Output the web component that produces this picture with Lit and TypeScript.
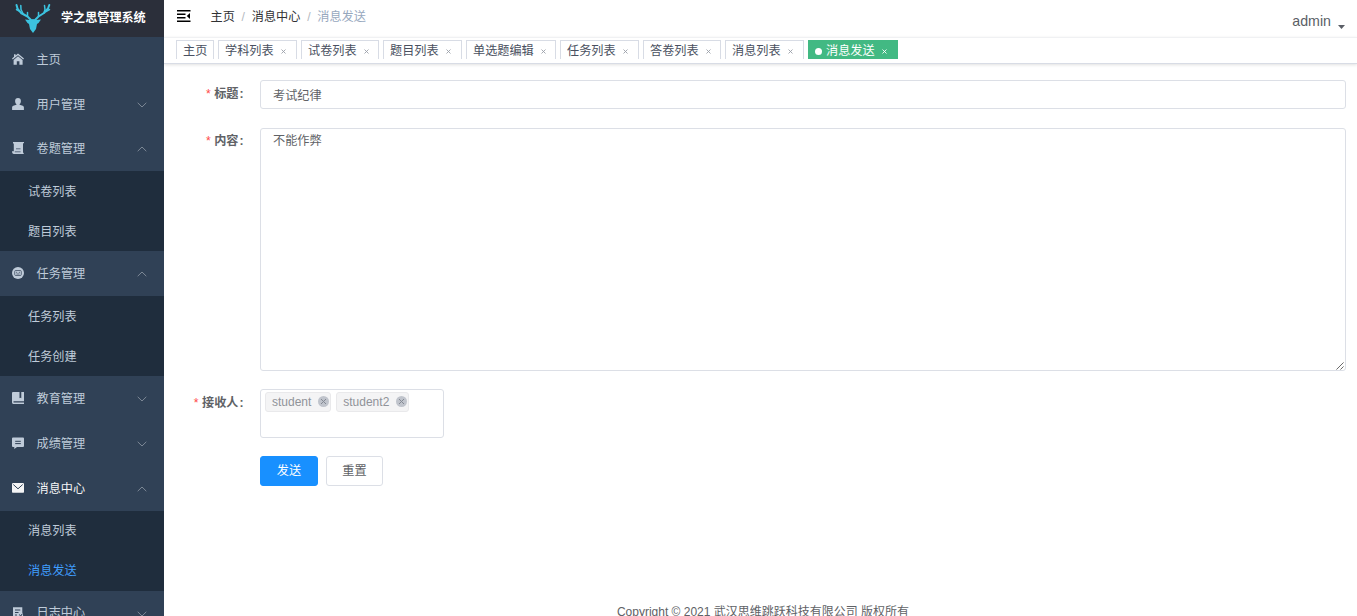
import { LitElement, html, svg, css, nothing } from "lit";
import { customElement, property } from "lit/decorators.js";
import { classMap } from "lit/directives/class-map.js";
import { styleMap } from "lit/directives/style-map.js";

const icons: Record<string, unknown> = {
  home: svg`<path d="M6 0.4 12 5.6 11.2 6.6 6 2.2 0.8 6.6 0 5.6 2 3.8V1.2H3.6V2.5Z"/><path d="M6 3.2 10.6 7.1V11.8H7.4V8.2H4.8V11.8H1.6V7.1Z"/>`,
  user: svg`<path d="M6 0a2.900 2.900 0 0 1 2.900 2.900c0 1.500-.6 2.600-1.300 3.200v.7l3.100 1c.8.3 1.200 1 1.200 1.800V11.900H.1V9.600c0-.8.4-1.500 1.200-1.800l3.100-1v-.7C3.700 5.500 3.100 4.400 3.100 2.900a2.900 2.900 0 0 1 2.900-2.900Z"/>`,
  paper: svg`<path d="M1 0H12V1.300H11V10.300L12 12H2C.6 12 0 10.900 0 9.300H1.800V1.400H1Z"/><path d="M4 6.800H8.500M2.800 9.800H8.600" class="cut thin"/>`,
  task: svg`<circle cx="6" cy="6" r="6"/><rect x="2.700" y="3.500" width="6.600" height="5" rx="1" class="cut thin"/><path d="M4 5.300H5.200M6.800 5.300H8M4.400 7H7.600" class="cut thin"/>`,
  book: svg`<path d="M1 0H7.500V6.300L8.400 5.700 9.300 6.300V0H12V9.200H1.500V10.400H12V12H1.200Q0 12 0 10.600V1Q0 0 1 0Z"/>`,
  chat: svg`<path d="M1 .600H11Q12 .600 12 1.600V9Q12 10 11 10H5L2.300 11.900V10H1Q0 10 0 9V1.600Q0 .600 1 .600Z"/><path d="M3.200 4.300H8.800M3.200 6.600H8.800" class="cut"/>`,
  mail: svg`<path d="M.600 1.100H11.400L12 1.700V10.200L11.400 10.800H.600L0 10.200V1.700Z"/><path d="M1.300 2.500 6 6.800 10.700 2.500" class="cut"/>`,
  log: svg`<path d="M1 .200H10.300V5.600L12 11.800H0V10.500H1Z"/><path d="M3 3H8.300M3 5.500H6.500M3 8H5M7 7.500 10.500 10.500M10 7 8 10.500" class="cut"/>`,
};

interface MenuGroup {
  label: string;
  icon: string;
  arrow?: "up" | "down";
  current?: boolean;
  size?: "short" | "raised";
  children?: { label: string; current?: boolean }[];
}

const menu: MenuGroup[] = [
  { label: "主页", icon: "home" },
  { label: "用户管理", icon: "user", arrow: "down", size: "short" },
  { label: "卷题管理", icon: "paper", arrow: "up", children: [{ label: "试卷列表" }, { label: "题目列表" }] },
  { label: "任务管理", icon: "task", arrow: "up", children: [{ label: "任务列表" }, { label: "任务创建" }] },
  { label: "教育管理", icon: "book", arrow: "down" },
  { label: "成绩管理", icon: "chat", arrow: "down" },
  { label: "消息中心", icon: "mail", arrow: "up", current: true, children: [{ label: "消息列表" }, { label: "消息发送", current: true }] },
  { label: "日志中心", icon: "log", arrow: "down", size: "raised" },
];

const tabs = [
  { label: "主页", width: 38 },
  { label: "学科列表", width: 79 },
  { label: "试卷列表", width: 78 },
  { label: "题目列表", width: 79 },
  { label: "单选题编辑", width: 90 },
  { label: "任务列表", width: 79 },
  { label: "答卷列表", width: 78 },
  { label: "消息列表", width: 79 },
  { label: "消息发送", width: 90, current: true },
];

@customElement("side-menu")
class SideMenu extends LitElement {
  static styles = css`
    :host { display: block; width: 164px; flex: none; height: 616px; overflow: hidden; background: #304156; color: #bfcbd9; }
    .brand { height: 37px; background: #2b2f3a; display: flex; align-items: center; color: #fff; font-weight: bold; font-size: 12.100px; }
    .logo { width: 36px; height: 32px; margin: 0 10px 2px 15px; display: block; }
    .brand-name { padding-bottom: 4px; white-space: nowrap; }
    .row { height: 45px; box-sizing: border-box; display: flex; align-items: center; padding: 0 17px 0 12px; }
    .row.short { height: 44px; padding-top: 1px; }
    .row.raised { padding-bottom: 1px; }
    .row.current { color: #f4f4f5; }
    .icon { width: 12px; height: 12px; fill: currentColor; display: block; margin: 0 12.500px 1px 0; }
    .icon .cut { fill: none; stroke: #304156; stroke-width: 1; }
    .icon .thin { stroke-width: .7; }
    .label { flex: 1; line-height: 18px; }
    .arrow { width: 10px; height: 6px; fill: none; stroke: #7d8896; stroke-width: 1; display: block; margin-top: 1px; }
    .sub { background: #1f2d3d; }
    .leaf { height: 40px; box-sizing: border-box; padding: 1px 0 0 28px; line-height: 40px; overflow: hidden; }
    .row.current + .sub .leaf { padding-top: 0; }
    .leaf.current { color: #409eff; }
  `;
  render() {
    return html`
      <div class="brand">
        <svg class="logo" viewBox="0 0 36 32">
          <g fill="none" stroke="#3cc3df" stroke-linecap="round" stroke-linejoin="round">
            <path stroke-width="2" d="M16 18 12.500 14.500 6 11 2.500 6.500 1.500 3M20 18 23.500 14.500 29 11 33 6.500 34.300 3"/>
            <path stroke-width="1.500" d="M5 9.500 1.500 7.500M8 11.500 6 7.500 5.800 3.500M12.500 14 12.500 10.500M29 10.800 30 7.500 29.500 3.500M31 9.500 34.500 7.500M23.500 14 23.500 10.500"/>
          </g>
          <path fill="#3cc3df" d="M10 17.500 15 18 18 17 21 18 26 17.500 23.500 21 22 22 21 27 18 31 15 27 14 22 12.500 21Z"/>
        </svg>
        <span class="brand-name">学之思管理系统</span>
      </div>
      ${menu.map((g) => html`
        <div class=${classMap({ row: true, current: !!g.current, short: g.size === "short", raised: g.size === "raised" })}>
          <svg class="icon" viewBox="0 0 12 12">${icons[g.icon]}</svg>
          <span class="label">${g.label}</span>
          ${g.arrow ? html`<svg class="arrow" viewBox="0 0 10 6"><path d=${g.arrow === "up" ? "M.7 5.200 5 1 9.300 5.200" : "M.7 .8 5 5 9.300 .8"}/></svg>` : nothing}
        </div>
        ${g.children ? html`<div class="sub">${g.children.map((c) => html`<div class=${classMap({ leaf: true, current: !!c.current })}>${c.label}</div>`)}</div>` : nothing}
      `)}
    `;
  }
}

@customElement("top-bar")
class TopBar extends LitElement {
  static styles = css`
    :host { display: block; }
    .nav { height: 37px; box-sizing: border-box; display: flex; align-items: flex-start; padding: 0 12px 0 13px; }
    .fold { width: 14px; height: 12px; display: block; margin: 10px 19.500px 0 0; }
    .crumbs { display: flex; flex: 1; color: #303133; line-height: 18px; padding-top: 8px; font-size: 12.150px; }
    .sep { width: 17px; text-align: center; color: #b4b8c0; }
    .last { color: #97a8be; }
    .user { display: flex; font-size: 14.200px; line-height: 16px; color: #5a5e66; padding-top: 13px; }
    .caret { width: 7px; height: 4px; margin: 12px 0 0 7px; fill: #5a5e66; display: block; }
    .tabs { height: 27px; box-sizing: border-box; padding: 2px 12px 0; display: flex; gap: 4px; border-top: 1px solid #f0f1f3; border-bottom: 1px solid #d8dce5; box-shadow: 0 1px 3px rgba(0,0,0,.12); }
    .tab { height: 19px; line-height: 20px; box-sizing: border-box; border: 1px solid #d8dce5; border-bottom: 0; color: #495060; padding-left: 6px; display: flex; white-space: nowrap; }
    .tab.current { background: #42b983; border-color: #42b983; color: #fff; }
    .dot { width: 7px; height: 7px; border-radius: 50%; background: #fff; margin: 7px 4px 0 0; }
    .close { width: 5px; height: 5px; stroke: #9a9fa8; stroke-width: .9; margin: 8px 0 0 7px; display: block; }
    .tab.current .close { stroke: #fff; }
  `;
  render() {
    return html`
      <div class="nav">
        <svg class="fold" viewBox="0 0 14 12"><path d="M0 0h13.500v1.600H0ZM0 3.500h8.500v1.500H0ZM0 7h8.500v1.500H0ZM0 10.400h13.500V12H0ZM13 3v6L9.800 6Z"/></svg>
        <div class="crumbs"><span>主页</span><span class="sep">/</span><span>消息中心</span><span class="sep">/</span><span class="last">消息发送</span></div>
        <div class="user">admin<svg class="caret" viewBox="0 0 7 4"><path d="M0 0h7L3.500 4Z"/></svg></div>
      </div>
      <div class="tabs">
        ${tabs.map((t, i) => html`
          <div class=${classMap({ tab: true, current: !!t.current })} style=${styleMap({ width: `${t.width}px` })}>
            ${t.current ? html`<span class="dot"></span>` : nothing}<span>${t.label}</span>
            ${i ? html`<svg class="close" viewBox="0 0 5 5"><path d="M.5.5 4.500 4.500M4.500.5.5 4.500"/></svg>` : nothing}
          </div>`)}
      </div>
    `;
  }
}

@customElement("form-row")
class FormRow extends LitElement {
  @property() label = "";
  static styles = css`
    :host { display: flex; }
    .label { width: 81px; box-sizing: border-box; flex: none; text-align: right; padding-right: 16.500px; font-weight: bold; line-height: var(--label-line, 28px); color: #606266; white-space: nowrap; }
    .star { color: #ff4949; font-weight: normal; margin-right: 3.500px; }
    .colon { display: inline-block; width: 5px; }
    .field { flex: 1; min-width: 0; }
  `;
  render() {
    return html`
      <div class="label">${this.label ? html`<span class="star">*</span>${this.label}<span class="colon">:</span>` : nothing}</div>
      <div class="field"><slot></slot></div>
    `;
  }
}

@customElement("app-root")
class AppRoot extends LitElement {
  static styles = css`
    :host { display: flex; width: 1357px; height: 616px; overflow: hidden; background: #fff; font-family: "Liberation Sans", "Noto Sans CJK SC", sans-serif; font-size: 12.150px; color: #606266; }
    .main { flex: 1; min-width: 0; display: flex; flex-direction: column; }
    .form { padding: 16px 11px 0 15px; display: flex; flex-direction: column; }
    .box { border: 1px solid #dcdfe6; border-radius: 3px; box-sizing: border-box; padding-left: 12px; }
    .input { height: 29px; line-height: 30px; }
    .content { margin-top: 19px; --label-line: 26px; }
    .area { height: 243px; line-height: 24px; display: flex; justify-content: space-between; align-items: flex-start; }
    .grip { width: 8px; height: 8px; align-self: flex-end; stroke: #555; stroke-width: 1; display: block; margin-right: 1px; }
    .people { margin-top: 18px; }
    .select { width: 184px; height: 49px; padding: 2px 4px; display: flex; gap: 5px; }
    .tag { height: 20px; box-sizing: border-box; border: 1px solid #e9e9eb; background: #f4f4f5; border-radius: 3px; color: #909399; display: flex; align-items: center; font-size: 12px; line-height: 18px; padding: 0 1.500px 0 6px; white-space: nowrap; }
    .remove { width: 11px; height: 11px; margin: 0 0 1px 6.400px; display: block; }
    .actions { margin-top: 18px; }
    .buttons { display: flex; gap: 8px; }
    .btn { height: 30px; width: 57px; box-sizing: border-box; border: 1px solid #dcdfe6; border-radius: 3px; line-height: 28px; text-align: center; }
    .primary { width: 58px; background: #1890ff; border-color: #1890ff; color: #fff; }
    .footer { margin-top: 117px; text-align: center; font-size: 12px; line-height: 18px; white-space: nowrap; padding-left: 5px; }
  `;
  render() {
    const remove = html`<svg class="remove" viewBox="0 0 11 11"><circle cx="5.500" cy="5.500" r="5.500" fill="#c0c4cc"/><path d="M3 3 8 8M8 3 3 8" stroke="#858a94" stroke-width="1"/></svg>`;
    return html`
      <side-menu></side-menu>
      <div class="main">
        <top-bar></top-bar>
        <div class="form">
          <form-row label="标题"><div class="box input">考试纪律</div></form-row>
          <form-row class="content" label="内容">
            <div class="box area"><span>不能作弊</span><svg class="grip" viewBox="0 0 9 9"><path d="M.5 8.500 8.500.5M5 8.500 8.500 5"/></svg></div>
          </form-row>
          <form-row class="people" label="接收人">
            <div class="box select"><span class="tag">student${remove}</span><span class="tag">student2${remove}</span></div>
          </form-row>
          <form-row class="actions"><div class="buttons"><div class="btn primary">发送</div><div class="btn">重置</div></div></form-row>
        </div>
        <div class="footer">Copyright © 2021 武汉思维跳跃科技有限公司 版权所有</div>
      </div>
    `;
  }
}
